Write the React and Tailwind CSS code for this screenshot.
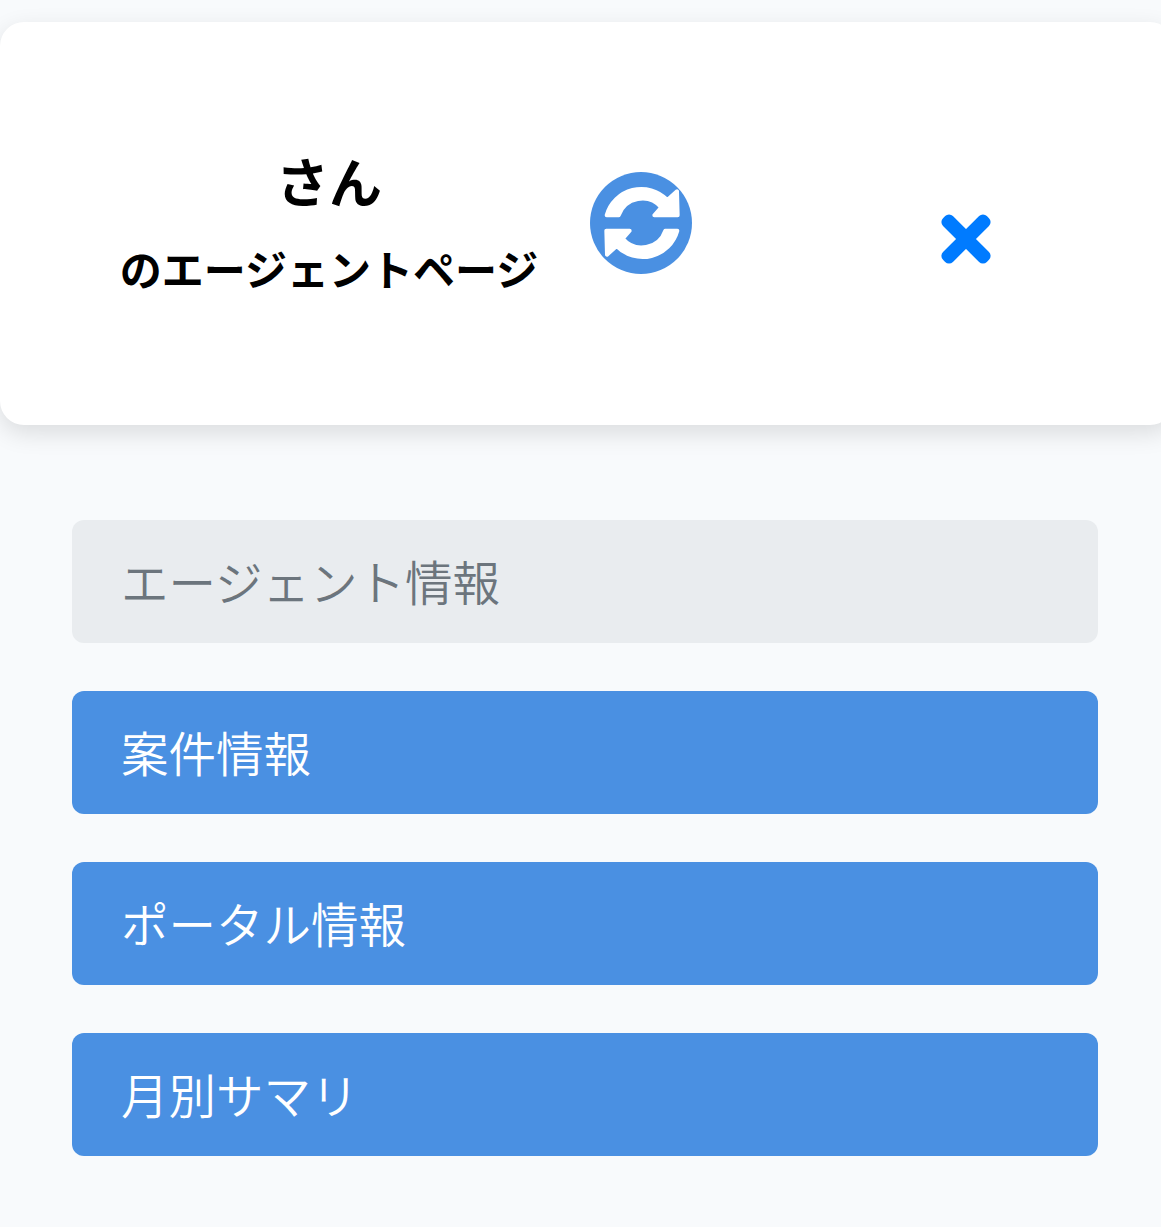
import React from 'react';

const jp = { fontFamily: '"Noto Sans CJK JP", sans-serif' };

const arrowPath = 'M50 130 A108 108 0 0 1 232 84 L261 58 L263 130 L193 130 L214 106 A75 75 0 0 0 86 130 Z';

const SyncIcon = () => (
  <svg width="102" height="102" viewBox="0 0 306 306" className="shrink-0">
    <circle cx="153" cy="153" r="153" fill="#4a90e2" />
    <g fill="#fff" stroke="#fff" strokeWidth="12" strokeLinejoin="round">
      <path d={arrowPath} />
      <path transform="rotate(180 156 153)" d={arrowPath} />
    </g>
  </svg>
);

const CloseIcon = () => (
  <svg width="50" height="50" viewBox="0 0 50 50" className="shrink-0">
    <g fill="#007bff">
      <rect x="-6" y="18" width="62" height="14" rx="5.5" transform="rotate(45 25 25)" />
      <rect x="-6" y="18" width="62" height="14" rx="5.5" transform="rotate(-45 25 25)" />
    </g>
  </svg>
);

const MenuRow = ({ label, disabled }) => (
  <div className={`h-[123px] rounded-xl flex items-center pl-[49px] pb-[2px] text-[47.5px] font-[350] ${disabled ? 'bg-[#e9ecef] text-[#6c757d]' : 'bg-[#4a90e2] text-white'}`}>
    {label}
  </div>
);

export default function App() {
  return (
    <div className="min-h-[1227px] bg-[#f8fafc] pt-[22px] overflow-hidden" style={jp}>
      <header className="h-[403px] -mr-[13px] bg-white rounded-3xl shadow-[0_8px_24px_rgba(0,0,0,0.12)] flex items-center pl-[120px]">
        <div className="w-[418px] mb-[4px] flex flex-col items-center text-black font-bold">
          <div className="text-[53px] leading-[72px]">さん</div>
          <div className="text-[42px] leading-[62px] mt-[21px] whitespace-nowrap">のエージェントページ</div>
        </div>
        <div className="ml-[52px] mb-[2px]"><SyncIcon /></div>
        <div className="ml-[249px] mt-[30px]"><CloseIcon /></div>
      </header>
      <nav className="ml-[72px] mr-[63px] mt-[95px] flex flex-col gap-[48px]">
        <MenuRow label="エージェント情報" disabled />
        <MenuRow label="案件情報" />
        <MenuRow label="ポータル情報" />
        <MenuRow label="月別サマリ" />
      </nav>
    </div>
  );
}
